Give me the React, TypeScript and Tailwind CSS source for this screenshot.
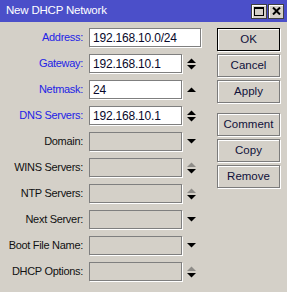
import React from 'react'

type Arrow = 'both' | 'up' | 'down' | 'grayup' | 'none'

interface Row {
  label: string
  value?: string
  blue?: boolean
  arrow: Arrow
  wide?: boolean
}

const rows: Row[] = [
  { label: 'Address:', value: '192.168.10.0/24', blue: true, arrow: 'none', wide: true },
  { label: 'Gateway:', value: '192.168.10.1', blue: true, arrow: 'both' },
  { label: 'Netmask:', value: '24', blue: true, arrow: 'up' },
  { label: 'DNS Servers:', value: '192.168.10.1', blue: true, arrow: 'both' },
  { label: 'Domain:', arrow: 'down' },
  { label: 'WINS Servers:', arrow: 'grayup' },
  { label: 'NTP Servers:', arrow: 'grayup' },
  { label: 'Next Server:', arrow: 'down' },
  { label: 'Boot File Name:', arrow: 'down' },
  { label: 'DHCP Options:', arrow: 'grayup' },
]

function ArrowIcon({ kind }: { kind: Arrow }) {
  if (kind === 'none') return null
  if (kind === 'up') {
    return (
      <svg width="9" height="5" viewBox="0 0 9 5">
        <polygon points="0,5 4.5,0.5 9,5" fill="#000" />
      </svg>
    )
  }
  if (kind === 'down') {
    return (
      <svg width="9" height="5" viewBox="0 0 9 5">
        <polygon points="0,0 9,0 4.5,4.5" fill="#000" />
      </svg>
    )
  }
  const upFill = kind === 'grayup' ? '#8e8c88' : '#000'
  return (
    <svg width="9" height="12" viewBox="0 0 9 12">
      <polygon points="0,5 4.5,0.5 9,5" fill={upFill} />
      <polygon points="0,7 9,7 4.5,11.5" fill="#000" />
    </svg>
  )
}

function Button({ label, isDefault }: { label: string; isDefault?: boolean }) {
  return (
    <div
      className={`h-[23px] w-[63px] flex items-center justify-center text-[11.5px] text-[#10103a] border ${
        isDefault ? 'border-black' : 'border-[#7b7b7b]'
      } shadow-[inset_1px_1px_0_#fff,1px_1px_0_#fff] bg-[#d4d0c8]`}
    >
      {label}
    </div>
  )
}

export default function App() {
  return (
    <div
      className="w-[287px] h-[292px] bg-[#d4d0c8] flex flex-col overflow-hidden"
      style={{ fontFamily: '"Liberation Sans", Arial, sans-serif' }}
    >
      <div className="h-[22px] bg-[#4b4fc9] flex items-center pl-[6px] pr-[3px]">
        <span className="text-white text-[11.5px] tracking-[-0.2px] flex-1">New DHCP Network</span>
        <div className="flex gap-[1px]">
          <div className="w-[16px] h-[15px] bg-[#d4d0c8] border border-[#404040] shadow-[inset_1px_1px_0_#fff] flex items-center justify-center">
            <svg width="10" height="9" viewBox="0 0 10 9">
              <rect x="0.5" y="0.5" width="9" height="8" fill="none" stroke="#000" />
              <rect x="0" y="0" width="10" height="2" fill="#000" />
            </svg>
          </div>
          <div className="w-[16px] h-[15px] bg-[#d4d0c8] border border-[#404040] shadow-[inset_1px_1px_0_#fff] flex items-center justify-center">
            <svg width="9" height="8" viewBox="0 0 9 8">
              <path d="M1 0.5 L8 7.5 M8 0.5 L1 7.5" stroke="#000" strokeWidth="2" />
            </svg>
          </div>
        </div>
      </div>

      <div className="flex pt-[6px]">
        <div className="flex flex-col gap-[7px]">
          {rows.map((r) => (
            <div key={r.label} className="flex items-center h-[19px]">
              <div
                className={`w-[83px] text-right text-[11px] tracking-[-0.3px] ${
                  r.blue ? 'text-[#2323e6]' : 'text-[#111]'
                }`}
              >
                {r.label}
              </div>
              <div
                className={`ml-[6px] h-[19px] ${r.wide ? 'w-[112px]' : 'w-[93px]'} border border-[#7f7f7f] shadow-[1px_1px_0_#fff] flex items-center pl-[3px] text-[12px] tracking-[-0.2px] text-[#08082a] ${
                  r.value !== undefined ? 'bg-white' : 'bg-[#d4d0c8]'
                }`}
              >
                {r.value}
              </div>
              {!r.wide && (
                <div className="w-[18px] flex items-center justify-center">
                  <ArrowIcon kind={r.arrow} />
                </div>
              )}
            </div>
          ))}
        </div>

        <div className="ml-[16px] flex flex-col gap-[3px]">
          <Button label="OK" isDefault />
          <Button label="Cancel" />
          <Button label="Apply" />
          <div className="h-[4px]" />
          <Button label="Comment" />
          <Button label="Copy" />
          <Button label="Remove" />
        </div>
      </div>
    </div>
  )
}
